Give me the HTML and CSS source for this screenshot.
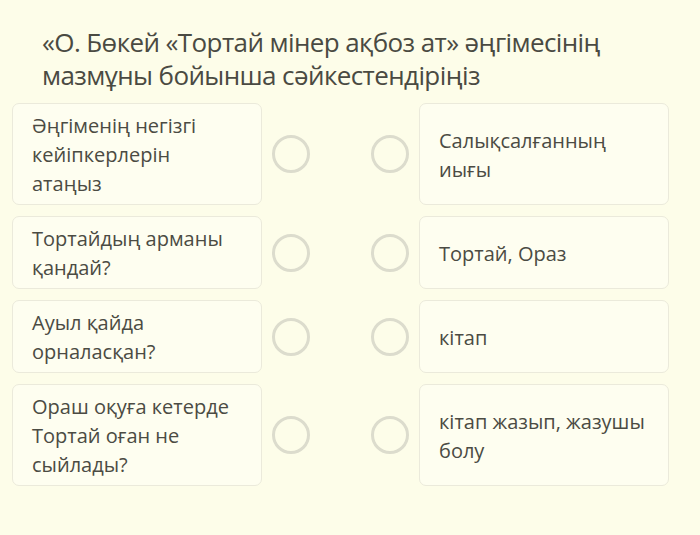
FILE: index.html
```html
<!DOCTYPE html>
<html>

<head>
    <meta charset="utf-8">
    <title>Сәйкестендіру</title>
    <link rel="stylesheet" href="styles.css">
</head>

<body>
    <div id="quiz">
        <h1 class="question">«О. Бөкей «Тортай мінер ақбоз ат» әңгімесінің мазмұны бойынша сәйкестендіріңіз</h1>
        <div class="pairs">
            <div class="card left">Әңгіменің негізгі кейіпкерлерін атаңыз</div>
            <div class="dot first"></div>
            <div class="dot second"></div>
            <div class="card right">Салықсалғанның иығы</div>

            <div class="card left">Тортайдың арманы қандай?</div>
            <div class="dot first"></div>
            <div class="dot second"></div>
            <div class="card right">Тортай, Ораз</div>

            <div class="card left">Ауыл қайда орналасқан?</div>
            <div class="dot first"></div>
            <div class="dot second"></div>
            <div class="card right">кітап</div>

            <div class="card left">Ораш оқуға кетерде Тортай оған не сыйлады?</div>
            <div class="dot first"></div>
            <div class="dot second"></div>
            <div class="card right">кітап жазып, жазушы болу</div>
        </div>
    </div>
</body>

</html>
```

FILE: styles.css
```css
body {
    margin: 0;
    padding: 0;
    background-color: #fdfde9;
    color: #4b4b43;
    font-family: "Open Sans", "DejaVu Sans", sans-serif;
}

#quiz {
    padding: 26px 31px 40px 12px;
}

.question {
    margin: 0 0 11px 30px;
    font-size: 26px;
    font-weight: 400;
    line-height: 33px;
    letter-spacing: -0.6px;
    color: #4a4a42;
}

.pairs {
    display: grid;
    grid-template-columns: 250px 1fr 1fr 250px;
    row-gap: 11px;
    align-items: stretch;
}

.card {
    background: #fefef0;
    border: 1px solid #ebeadb;
    border-radius: 7px;
    padding: 7px 20px 6px 19px;
    font-size: 20px;
    line-height: 29px;
    min-height: 58px;
}

.card.right {
    display: flex;
    align-items: center;
}

.dot {
    width: 32px;
    height: 32px;
    border: 3px solid #dcdccd;
    border-radius: 50%;
    align-self: center;
}

.dot.first {
    justify-self: start;
    margin-left: 10px;
}

.dot.second {
    justify-self: end;
    margin-right: 10px;
}
```
